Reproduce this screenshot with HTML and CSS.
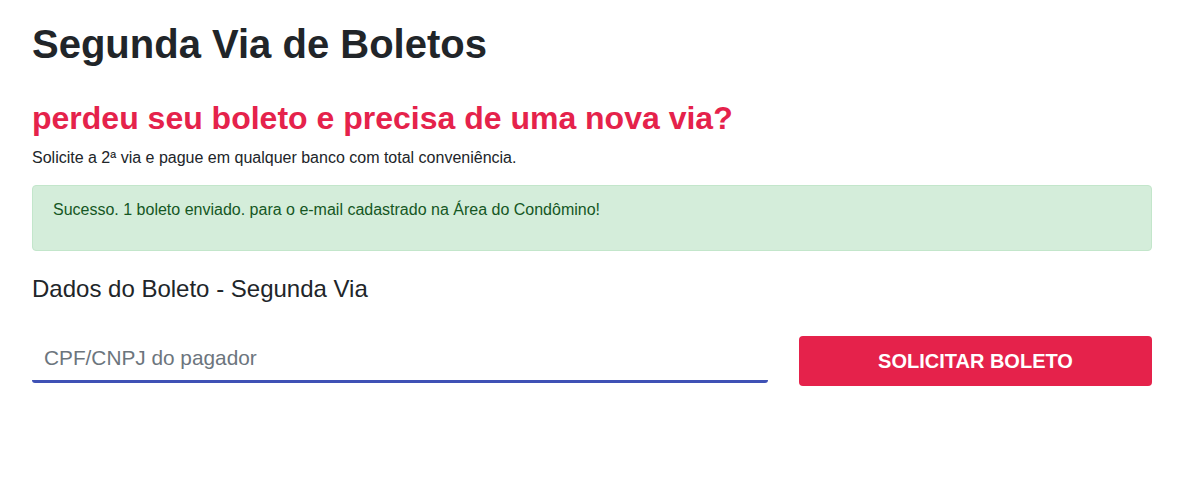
FILE: index.html
```html
<!DOCTYPE html>
<html lang="pt-BR">
<head>
<meta charset="utf-8">
<title>Segunda Via de Boletos</title>
<link rel="stylesheet" href="styles.css">
</head>
<body>
<div class="container">
  <h1 class="title">Segunda Via de Boletos</h1>
  <h2 class="subtitle">perdeu seu boleto e precisa de uma nova via?</h2>
  <p class="lead">Solicite a 2ª via e pague em qualquer banco com total conveniência.</p>
  <div class="alert">Sucesso. 1 boleto enviado. para o e-mail cadastrado na Área do Condômino!</div>
  <h4 class="section">Dados do Boleto - Segunda Via</h4>
  <form class="form-row">
    <div class="field"><input class="input" type="text" placeholder="CPF/CNPJ do pagador"></div>
    <button class="btn" type="button">SOLICITAR BOLETO</button>
  </form>
</div>
</body>
</html>
```
FILE: styles.css
```css
* { box-sizing: border-box; }
body {
  margin: 0;
  background: #fff;
  color: #212529;
  font-family: "Liberation Sans", Arial, sans-serif;
}
.container {
  padding: 0 49px 0 32px;
}
.title {
  margin: 20px 0 0;
  font-size: 40px;
  font-weight: 700;
  line-height: 1.2;
}
.subtitle {
  margin: 31px 0 0;
  font-size: 32px;
  font-weight: 700;
  line-height: 1.2;
  color: #e5224b;
}
.lead {
  margin: 9px 0 0;
  font-size: 16px;
  line-height: 1.5;
}
.alert {
  margin-top: 15px;
  height: 66px;
  padding: 12px 20px;
  background: #d4edda;
  border: 1px solid #c3e6cb;
  border-radius: 4px;
  color: #155724;
  font-size: 16px;
  line-height: 1.5;
}
.section {
  margin: 24px 0 0;
  font-size: 24px;
  font-weight: 400;
  line-height: 1.2;
}
.form-row {
  display: flex;
  gap: 31px;
  margin-top: 32px;
  align-items: flex-start;
}
.field { flex: 0 0 736px; }
.input {
  width: 100%;
  height: 47px;
  border: 0;
  border-bottom: 3px solid #3f51b5;
  border-radius: 3px;
  padding: 0 12px;
  font-family: "Liberation Sans", Arial, sans-serif;
  font-size: 20.8px;
  color: #495057;
  background: #fff;
  outline: none;
}
.input::placeholder { color: #6c757d; }
.btn {
  flex: 1;
  height: 50px;
  border: 0;
  border-radius: 4px;
  background: #e5224b;
  color: #fff;
  font-family: "Liberation Sans", Arial, sans-serif;
  font-size: 20px;
  font-weight: 700;
  cursor: pointer;
}
```
